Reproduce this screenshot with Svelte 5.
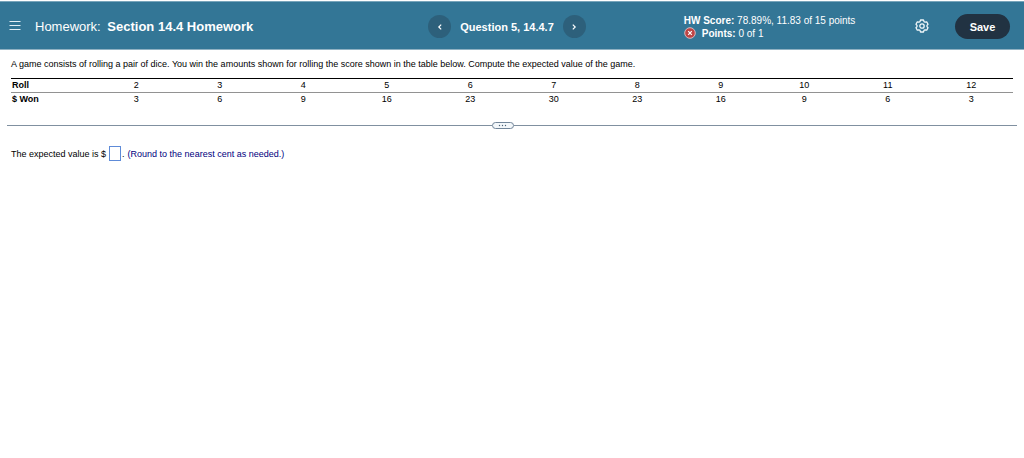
<script>
  const rolls = [2, 3, 4, 5, 6, 7, 8, 9, 10, 11, 12];
  const winnings = [3, 6, 9, 16, 23, 30, 23, 16, 9, 6, 3];
  let answer = $state('');
</script>

<header>
  <div class="title">
    <button class="icon menu" aria-label="Menu">
      <svg width="12" height="11" viewBox="0 0 12 11" aria-hidden="true">
        <path d="M0.500 1.500h11M0.500 5.500h11M0.500 9.500h11" stroke="#e4f0f6" />
      </svg>
    </button>
    <h1>Homework: <strong>Section 14.4 Homework</strong></h1>
  </div>

  <nav>
    <button class="icon step" aria-label="Previous question">
      <svg width="6" height="8" viewBox="0 0 6 8" aria-hidden="true">
        <path d="M4.200 1.600 1.800 4l2.400 2.400" fill="none" stroke="#fff" stroke-width="1.200" />
      </svg>
    </button>
    <h2>Question 5, 14.4.7</h2>
    <button class="icon step" aria-label="Next question">
      <svg width="6" height="8" viewBox="0 0 6 8" aria-hidden="true">
        <path d="M1.800 1.600 4.200 4 1.800 6.400" fill="none" stroke="#fff" stroke-width="1.200" />
      </svg>
    </button>
  </nav>

  <div class="side">
    <div class="score">
      <div><strong>HW Score:</strong> 78.89%, 11.83 of 15 points</div>
      <div class="points">
        <svg width="12" height="12" viewBox="0 0 12 12" aria-hidden="true">
          <circle cx="6" cy="6" r="5.300" fill="#bd4545" stroke="#e3c3c8" stroke-width="0.900" />
          <path d="M4.200 4.200l3.600 3.600M7.800 4.200 4.200 7.800" stroke="#fff" stroke-width="1.200" />
        </svg>
        <span><strong>Points:</strong> 0 of 1</span>
      </div>
    </div>
    <div class="actions">
      <button class="icon settings" aria-label="Settings">
        <svg width="14" height="14" viewBox="0 0 14 14" fill="none" stroke="#f0f7fa" stroke-width="1.300" stroke-linejoin="round" aria-hidden="true">
          <path d="M5.500 1h3l.5 1.600 1.100.6 1.600-.4 1.300 2.500-1 1.100v1.200l1 1.100-1.300 2.500-1.600-.4-1.100.6-.5 1.600h-3L5 11.400l-1.100-.6-1.600.4L1 8.700l1-1.100V6.400L1 5.300l1.300-2.500 1.600.4L5 2.600z" />
          <circle cx="7" cy="7" r="2.200" />
        </svg>
      </button>
      <button class="save">Save</button>
    </div>
  </div>
</header>

<main>
  <p>A game consists of rolling a pair of dice. You win the amounts shown for rolling the score shown in the table below. Compute the expected value of the game.</p>

  <table>
    <tbody>
      <tr>
        <th scope="row">Roll</th>
        {#each rolls as roll}<td>{roll}</td>{/each}
      </tr>
      <tr>
        <th scope="row">$ Won</th>
        {#each winnings as amount}<td>{amount}</td>{/each}
      </tr>
    </tbody>
  </table>

  <div class="divider">
    <button class="icon handle" aria-label="Resize panels">
      <svg width="9" height="3" viewBox="0 0 9 3" fill="#4c6378" aria-hidden="true">
        <circle cx="1.500" cy="1.500" r=".7" /><circle cx="4.500" cy="1.500" r=".7" /><circle cx="7.500" cy="1.500" r=".7" />
      </svg>
    </button>
  </div>

  <div class="answer">
    <label for="answer">The expected value is $</label>
    <input id="answer" type="text" bind:value={answer} />
    <span>.</span>
    <span class="hint">(Round to the nearest cent as needed.)</span>
  </div>
</main>

<style>
  :global(body) {
    margin: 0;
    background: #fff;
    color: #000;
    font-family: "Liberation Sans", Arial, sans-serif;
    font-size: 9px;
  }
  button {
    border: 0;
    padding: 0;
    color: inherit;
    font: inherit;
    cursor: pointer;
  }
  .icon {
    display: flex;
    align-items: center;
    justify-content: center;
    background: none;
  }
  header {
    box-sizing: border-box;
    display: grid;
    grid-template-columns: 1fr auto 1fr;
    align-items: center;
    min-height: 49px;
    margin-top: 1px;
    padding: 2px 14px 0 4px;
    border-top: 1px solid #78a5bb;
    border-bottom: 1px solid #8fb1c2;
    background: #337696;
    color: #fff;
  }
  .title {
    display: flex;
    align-items: center;
    gap: 14px;
    padding-left: 5px;
    white-space: nowrap;
  }
  .menu, .settings {
    margin-bottom: 2px;
  }
  h1, h2 {
    margin: 0;
    line-height: 16px;
  }
  h1 {
    font-size: 13px;
    font-weight: 400;
  }
  h1 strong {
    margin-left: 3px;
  }
  nav {
    display: flex;
    align-items: center;
    gap: 9px;
    white-space: nowrap;
  }
  h2 {
    font-size: 11px;
  }
  .step {
    width: 23px;
    height: 23px;
    border-radius: 50%;
    background: #2d607b;
  }
  .side {
    display: flex;
    align-items: center;
    justify-content: space-between;
    padding-left: 98px;
  }
  .score {
    font-size: 10px;
    line-height: 13px;
    white-space: nowrap;
  }
  .points {
    display: flex;
    align-items: center;
    gap: 6px;
  }
  .actions {
    display: flex;
    align-items: center;
    gap: 26px;
  }
  .save {
    width: 55px;
    height: 25px;
    border-radius: 13px;
    background: #213242;
    font-size: 11px;
    font-weight: 700;
  }
  main {
    padding: 8px 7px;
  }
  p {
    margin: 0 4px 8px;
    line-height: 12px;
  }
  table {
    width: calc(100% - 8px);
    margin: 0 4px;
    border-collapse: collapse;
    table-layout: fixed;
    border-top: 1px solid #000;
    line-height: 13px;
  }
  th, td {
    padding: 0;
    text-align: center;
  }
  th {
    padding-left: 1px;
    text-align: left;
  }
  tr + tr {
    border-top: 1px solid #929292;
  }
  .divider {
    display: flex;
    align-items: center;
    margin-top: 16px;
  }
  .divider::before, .divider::after {
    content: "";
    flex: 1;
    height: 1px;
    background: #8090a0;
  }
  .divider::before {
    flex: 0 1 48%;
  }
  .handle {
    box-sizing: border-box;
    width: 22px;
    height: 7px;
    border: 1px solid #718599;
    border-radius: 4px;
    background: #f3f7fa;
  }
  .answer {
    display: flex;
    align-items: center;
    margin: 17px 4px 0;
    line-height: 14px;
  }
  input {
    box-sizing: border-box;
    width: 12px;
    height: 15px;
    margin: 0 1px 0 3px;
    padding: 0;
    border: 1px solid #5e8bd8;
    background: #fff;
    font: inherit;
  }
  .hint {
    margin-left: 3px;
    color: #000080;
  }
</style>
